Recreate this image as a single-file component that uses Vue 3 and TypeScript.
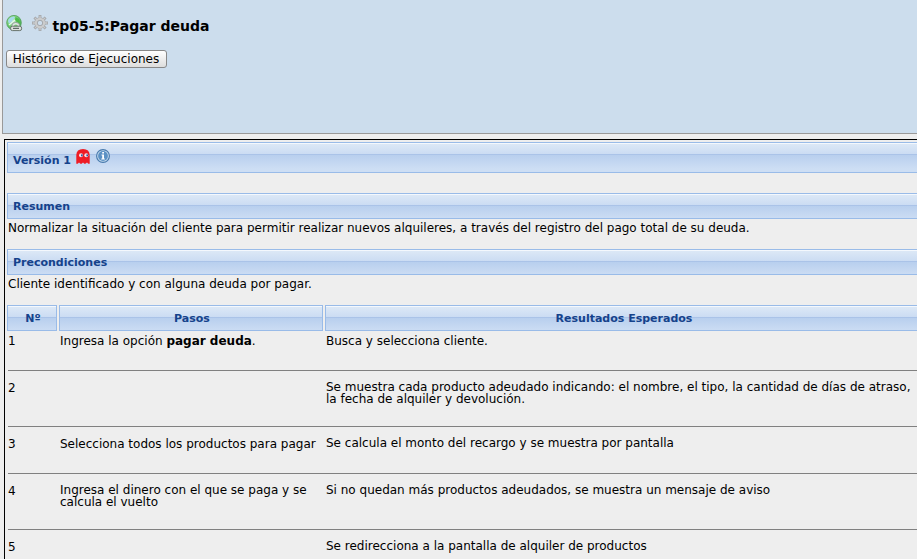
<script setup lang="ts">
interface Step {
  id: number
  action: string
  strong?: string
  expected: string
  height: number
  tight?: boolean
}

const steps: Step[] = [
  { id: 1, action: 'Ingresa la opción ', strong: 'pagar deuda', expected: 'Busca y selecciona cliente.', height: 40 },
  {
    id: 2,
    action: '',
    expected:
      'Se muestra cada producto adeudado indicando: el nombre, el tipo, la cantidad de días de atraso, la fecha de alquiler y devolución.',
    height: 56,
  },
  {
    id: 3,
    action: 'Selecciona todos los productos para pagar',
    expected: 'Se calcula el monto del recargo y se muestra por pantalla',
    height: 47,
  },
  {
    id: 4,
    action: 'Ingresa el dinero con el que se paga y se calcula el vuelto',
    expected: 'Si no quedan más productos adeudados, se muestra un mensaje de aviso',
    height: 56,
    tight: true,
  },
  { id: 5, action: '', expected: 'Se redirecciona a la pantalla de alquiler de productos', height: 47 },
]
</script>

<template>
  <div class="page">
    <header class="panel">
      <div class="title-row">
        <svg class="globe" width="17" height="17" viewBox="0 0 17 17">
          <defs>
            <radialGradient id="globeFill" cx=".4" cy=".35" r=".7">
              <stop offset="0" stop-color="#c4efc9" />
              <stop offset=".55" stop-color="#79d077" />
              <stop offset="1" stop-color="#35a040" />
            </radialGradient>
          </defs>
          <circle cx="8" cy="7.700" r="7.300" fill="url(#globeFill)" stroke="#5aa564" stroke-width=".9" />
          <path d="M2 6q1-4 6-4.500l1 1-2 2-1 2-3 2z" fill="#a4d9ea" />
          <path d="M9.500 2l3.500 2 1.200 4-3-.5-2.200-2.500z" fill="#4dbb49" />
          <path d="M3 10L9 5" stroke="#e5f8ec" stroke-width="1.300" />
          <path d="M6.800 11.500V11a3 2.700 0 0 1 6 0v.5" fill="none" stroke="#dfe6e1" stroke-width="2.200" />
          <path d="M5.800 11V10.800a4 3.400 0 0 1 8 0V11" fill="none" stroke="#7b8a81" stroke-width=".7" />
          <rect x="4.600" y="11.200" width="11" height="4.400" rx="1.800" fill="#dde0dd" stroke="#69746d" />
          <path d="M7 13.400h6" stroke="#5f6a64" stroke-width="1.200" />
        </svg>
        <svg class="gear" width="16" height="16" viewBox="0 0 16 16">
          <g stroke="#a3a5a8" stroke-width="2.800">
            <path d="M8 0v16M0 8h16M2.400 2.400l11.200 11.200M13.600 2.400L2.400 13.600" />
          </g>
          <circle cx="8" cy="8" r="5.700" fill="#a3a5a8" />
          <g stroke="#c9cacc" stroke-width="1.300">
            <path d="M8 .7v14.600M.7 8h14.600M2.900 2.900l10.200 10.200M13.100 2.900L2.900 13.100" />
          </g>
          <circle cx="8" cy="8" r="4.100" fill="none" stroke="#cbcccd" stroke-width="2.200" />
          <circle cx="8" cy="8" r="2.700" fill="#ccdded" stroke="#a3a5a8" stroke-width=".9" />
        </svg>
        <h1>tp05-5:Pagar deuda</h1>
      </div>
      <button type="button" class="history">Histórico de Ejecuciones</button>
    </header>

    <main class="box">
      <div class="bar version">
        <span>Versión 1</span>
        <svg class="ghost" width="14" height="15" viewBox="0 0 14 15">
          <path d="M.3 14.800V6Q.5 0 7 0t6.700 6v8.800h-1.400L11 13.400l-1.600 1.400H8.300L7 13.400l-1.300 1.400H4.400L3 13.400l-1.300 1.400z" fill="#ee1c25" />
          <circle cx="5" cy="6.300" r="2" fill="#f8dfe6" />
          <circle cx="10.300" cy="6.300" r="2" fill="#f8dfe6" />
          <rect x="5" y="5.400" width="1.700" height="1.900" fill="#31589a" />
          <rect x="10.400" y="5.400" width="1.700" height="1.900" fill="#31589a" />
        </svg>
        <svg class="info" width="14" height="14" viewBox="0 0 14 14">
          <circle cx="7" cy="7" r="6.400" fill="#c7dcef" stroke="#4779ac" stroke-width="1.100" />
          <circle cx="7" cy="7" r="4.900" fill="#5c91c4" />
          <path d="M6.200 3h1.800v1.600H6.200zM5.500 5.600h2.500v4h.8v1H5.300v-1h.9v-3h-.7z" fill="#fff" />
        </svg>
      </div>

      <section class="block">
        <div class="bar">Resumen</div>
        <p>Normalizar la situación del cliente para permitir realizar nuevos alquileres, a través del registro del pago total de su deuda.</p>
      </section>
      <section class="block">
        <div class="bar">Precondiciones</div>
        <p>Cliente identificado y con alguna deuda por pagar.</p>
      </section>

      <div class="cols heads">
        <div class="bar narrow">Nº</div>
        <div class="bar narrow">Pasos</div>
        <div class="bar">Resultados Esperados</div>
      </div>
      <div
        v-for="step in steps"
        :key="step.id"
        class="cols step"
        :class="{ first: step.id === 1, tight: step.tight }"
        :style="{ height: step.height + 'px' }"
      >
        <div>{{ step.id }}</div>
        <div class="action">{{ step.action }}<template v-if="step.strong"><b>{{ step.strong }}</b>.</template></div>
        <div class="expected">{{ step.expected }}</div>
      </div>
    </main>
  </div>
</template>

<style>
body {
  background: #eee;
}
</style>

<style scoped>
.page {
  height: 559px;
  overflow: hidden;
  background: #eee;
  color: #000;
  font: 12px/14px "DejaVu Sans", sans-serif;
}
.panel {
  box-sizing: border-box;
  height: 134px;
  margin-left: 2px;
  padding: 15px 0 0 3px;
  border-left: 1px solid #999;
  border-bottom: 1px solid #999;
  background: #ccdded;
}
.title-row {
  display: flex;
  align-items: flex-start;
  height: 35px;
}
.globe {
  margin-right: 9px;
}
.gear {
  margin-right: 4.5px;
}
h1 {
  margin: 3px 0 0;
  font-size: 14px;
  line-height: 16px;
  font-weight: bold;
}
.history {
  display: block;
  box-sizing: border-box;
  width: 161px;
  height: 18px;
  padding: 0 1px 0 0;
  border: 1px solid #888;
  border-radius: 3px;
  background: linear-gradient(#fff, #ddd);
  color: #000;
  font: 12px/14px "DejaVu Sans", sans-serif;
  white-space: nowrap;
}
.box {
  width: 1000px;
  margin: 5px 0 0 4px;
  padding: 2px 0 0 2px;
  border-left: 1px solid #000;
  border-top: 1px solid #000;
}
.bar {
  box-sizing: border-box;
  height: 26px;
  padding: 6px 5px 0;
  border: 1px solid #99bbe8;
  background: linear-gradient(#f4f8fd 0 1px, #dce8f6 1px, #cbdcf3 11px, #aac3e8 11px 12px, #b8cfee 12px, #cbdcf3 24px);
  color: #15428b;
  font-size: 11px;
  line-height: 13px;
  font-weight: bold;
}
.version {
  display: flex;
  align-items: flex-start;
  height: 31px;
  margin-bottom: 20px;
  background: linear-gradient(#f4f8fd 0 1px, #dce8f6 1px, #cbdcf3 11px, #aac3e8 11px 12px, #b8cfee 12px, #cddef4 26px);
}
.version span {
  margin-top: 5px;
}
.ghost {
  margin: 0 6px 0 5px;
}
.block {
  height: 56px;
}
.block p {
  margin: 2px 0 0 1px;
}
.cols {
  display: grid;
  grid-template-columns: 50px 264px 598px;
  column-gap: 2px;
}
.heads .bar {
  text-align: center;
}
.heads .narrow {
  padding-right: 3px;
}
.step {
  box-sizing: border-box;
  align-items: start;
  margin-left: 1px;
  padding-top: 10px;
  border-bottom: 1px solid #808080;
  line-height: 12px;
}
.step > div {
  padding-top: 1px;
}
.step .expected {
  padding-top: 0;
}
.step.first {
  padding-top: 4px;
}
.step.first > div {
  padding-top: 0;
}
.step.tight .action {
  padding-top: 0;
}
</style>
